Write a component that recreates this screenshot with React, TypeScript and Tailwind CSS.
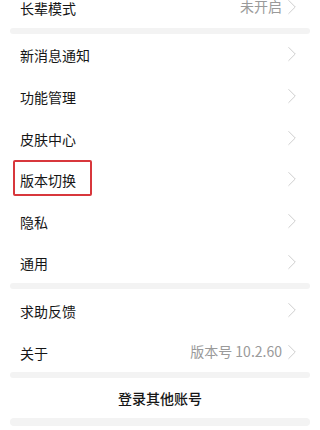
import { ChevronRight } from "lucide-react";

const GROUP_A = ["新消息通知", "功能管理", "皮肤中心", "版本切换", "隐私", "通用"];

function Row({
  label,
  value,
  boxed,
}: {
  label: string;
  value?: string;
  boxed?: boolean;
}) {
  return (
    <div className="flex h-[41.6px] items-center justify-between pl-5 pr-[15px]">
      <div className="relative">
        <span className="text-[14px] text-[#161616]">{label}</span>
        {boxed && (
          <span className="absolute -left-[7px] -right-[16px] -top-[7px] -bottom-[5px] rounded-[2px] border-2 border-[#d8373c]" />
        )}
      </div>
      <div className="flex items-center">
        {value && <span className="text-[14px] text-[#9a9a9a]">{value}</span>}
        <ChevronRight size={26} strokeWidth={0.9} className="-ml-[3px] text-[#cdcdcd]" />
      </div>
    </div>
  );
}

function Gap() {
  return <div className="mx-[10px] h-[6px] rounded-full bg-[#f3f3f3]" />;
}

export default function App() {
  return (
    <div
      className="h-[430px] w-[320px] overflow-hidden bg-white"
      style={{ fontFamily: '"Noto Sans CJK SC", "Noto Sans", sans-serif' }}
    >
      <div className="-mt-[14px]">
        <Row label="长辈模式" value="未开启" />
      </div>
      <Gap />
      {GROUP_A.map((t) => (
        <Row key={t} label={t} boxed={t === "版本切换"} />
      ))}
      <Gap />
      <Row label="求助反馈" />
      <Row label="关于" value="版本号 10.2.60" />
      <Gap />
      <div className="flex h-[40px] items-center justify-center">
        <span className="text-[14px] font-medium text-[#161616]">登录其他账号</span>
      </div>
      <div className="mx-[10px] h-[8px] rounded-full bg-[#f3f3f3]" />
    </div>
  );
}
